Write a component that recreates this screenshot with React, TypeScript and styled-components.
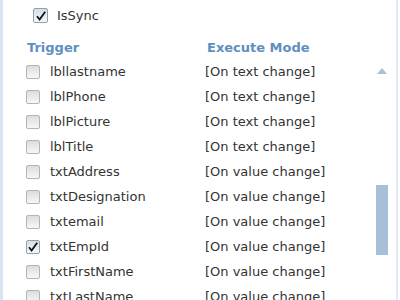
import React from "react";
import styled, { createGlobalStyle } from "styled-components";

const Global = createGlobalStyle`
  html, body { margin: 0; padding: 0; background: #ffffff; }
  body { font-family: "DejaVu Sans", Verdana, sans-serif; }
`;

const Frame = styled.div`
  width: 398px;
  height: 300px;
  overflow: hidden;
  display: flex;
  box-sizing: border-box;
  border-left: 3px solid #d7e4f2;
  border-right: 2px solid #e1eaf5;
  background: #ffffff;
`;

const Content = styled.div`
  flex: 1;
  display: flex;
  flex-direction: column;
  padding-left: 22px;
  padding-top: 0px;
  & > * { flex-shrink: 0; }
`;

const SyncRow = styled.label`
  height: 31px;
  display: flex;
  align-items: center;
  gap: 9px;
  padding-left: 7px;
  font-size: 13px;
  color: #333333;
  margin-bottom: 8px;
`;

const Grid = styled.div`
  display: grid;
  grid-template-columns: 25px 155px 1fr;
`;

const Head = styled.div<{ $indent: number }>`
  height: 20px;
  line-height: 18px;
  font-size: 13px;
  font-weight: bold;
  color: #5e8fbf;
  padding-left: ${(p) => p.$indent}px;
  white-space: nowrap;
`;

const HeadSpan = styled(Head)`
  grid-column: span 2;
`;

const Cell = styled.div`
  height: 25px;
  display: flex;
  align-items: center;
  font-size: 13px;
  color: #333333;
  white-space: nowrap;
`;

const Box = styled.span<{ $checked: boolean; $big?: boolean }>`
  width: ${(p) => (p.$big ? 15 : 14)}px;
  height: ${(p) => (p.$big ? 15 : 14)}px;
  box-sizing: border-box;
  margin-left: 1px;
  border: 1px solid ${(p) => (p.$checked ? "#8aa2b8" : "#b4b4b4")};
  border-radius: 2px;
  background: linear-gradient(#d9dde2, #f6f7f8);
  display: flex;
  align-items: center;
  justify-content: center;
`;

const Track = styled.div`
  width: 24px;
  padding: 68px 4px 0 0;
  box-sizing: border-box;
  display: flex;
  flex-direction: column;
  align-items: center;
  & > * { flex-shrink: 0; }
`;

const Arrow = styled.div`
  width: 0;
  height: 0;
  border-left: 5.5px solid transparent;
  border-right: 5.5px solid transparent;
  border-bottom: 6px solid #a9c0d6;
`;

const Thumb = styled.div`
  width: 12px;
  height: 70px;
  margin-top: 111px;
  background: #a7c0d7;
`;

const Check = () => (
  <svg width="12" height="12" viewBox="0 0 12 12">
    <path d="M2 6.2 L4.6 9.6 L10.2 1.8" fill="none" stroke="#111" strokeWidth="1.8" />
  </svg>
);

const CheckBox = ({ checked, big }: { checked: boolean; big?: boolean }) => (
  <Box $checked={checked} $big={big}>
    {checked && <Check />}
  </Box>
);

const rows: [string, string, boolean][] = [
  ["lbllastname", "[On text change]", false],
  ["lblPhone", "[On text change]", false],
  ["lblPicture", "[On text change]", false],
  ["lblTitle", "[On text change]", false],
  ["txtAddress", "[On value change]", false],
  ["txtDesignation", "[On value change]", false],
  ["txtemail", "[On value change]", false],
  ["txtEmpId", "[On value change]", true],
  ["txtFirstName", "[On value change]", false],
  ["txtLastName", "[On value change]", false],
];

export default function App() {
  return (
    <>
      <Global />
      <Frame>
        <Content>
          <SyncRow>
            <CheckBox checked big />
            IsSync
          </SyncRow>
          <Grid>
            <HeadSpan $indent={2}>Trigger</HeadSpan>
            <Head $indent={2}>Execute Mode</Head>
            {rows.map(([name, mode, checked]) => (
              <React.Fragment key={name}>
                <Cell>
                  <CheckBox checked={checked} />
                </Cell>
                <Cell>{name}</Cell>
                <Cell>{mode}</Cell>
              </React.Fragment>
            ))}
          </Grid>
        </Content>
        <Track>
          <Arrow />
          <Thumb />
        </Track>
      </Frame>
    </>
  );
}
